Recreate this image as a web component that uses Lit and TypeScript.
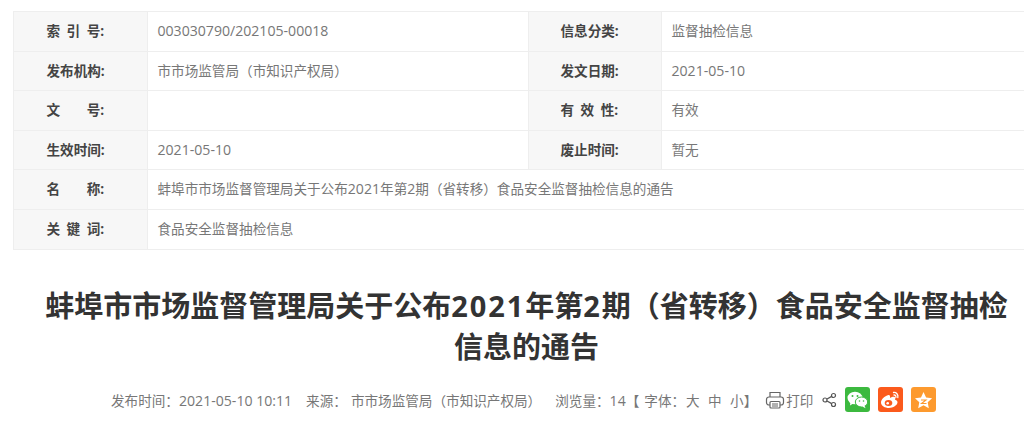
import { LitElement, html, css, svg } from "lit";
import { customElement } from "lit/decorators.js";

const num = (t: string) => html`<span class="num">${t}</span>`;

const rows: [string, unknown, string?, unknown?][] = [
  ["索 引 号:", num("003030790/202105-00018"), "信息分类:", "监督抽检信息"],
  ["发布机构:", "市市场监管局（市知识产权局）", "发文日期:", num("2021-05-10")],
  ["文　  号:", "", "有 效 性:", "有效"],
  ["生效时间:", num("2021-05-10"), "废止时间:", "暂无"],
  ["名　  称:", html`蚌埠市市场监督管理局关于公布${num("2021")}年第${num("2")}期（省转移）食品安全监督抽检信息的通告`],
  ["关 键 词:", "食品安全监督抽检信息"],
];

@customElement("app-root")
export class AppRoot extends LitElement {
  static styles = css`
    :host {
      display: block;
      width: 1024px;
      height: 422px;
      overflow: hidden;
      background: #fff;
      font-family: "Open Sans", "Noto Sans CJK SC", sans-serif;
      color: #777;
    }
    .wrap { padding: 11px 0 0 13px; }
    .table {
      display: grid;
      grid-template-columns: 134px 381px 133px 363px;
      width: 1012px;
      border-top: 1px solid #eee;
      border-left: 1px solid #eee;
      box-sizing: border-box;
    }
    .cell {
      height: 39.6px;
      box-sizing: border-box;
      border-right: 1px solid #eee;
      border-bottom: 1px solid #eee;
      font-size: 13.6px;
      padding-left: 9.5px;
      white-space: pre;
    }
    .value { line-height: 38.6px; }
    .num { font-size: 14.1px; }
    .label {
      background: #f7f7f7;
      color: #444;
      font-weight: 700;
      line-height: 37.6px;
      padding-left: 32.5px;
      word-spacing: 3px;
    }
    .label.second { padding-left: 31.5px; }
    .span3 { grid-column: span 3; }
    h1 {
      margin: 35px 0 0;
      padding: 0 14px 0 43px;
      text-align: center;
      font-size: 29px;
      line-height: 41px;
      font-weight: 700;
      color: #333;
    }
    .d { letter-spacing: 1.9px; }
    .meta {
      display: flex;
      align-items: center;
      height: 30px;
      margin-top: 18px;
      padding-left: 111px;
      font-size: 13.6px;
      color: #777;
      white-space: pre;
    }
    .time { margin-right: 14px; }
    .src-label { margin-right: 4px; }
    .src { margin-right: 14px; }
    .font-label { margin: 0 1px 0 5px; }
    .size { margin-right: 8.4px; }
    .size.last { margin-right: 0; }
    .print { display: flex; align-items: center; margin: 0 9px 0 8px; white-space: normal; }
    .print svg { margin-right: 1px; }
    .share { display: flex; margin-right: 8px; }
    .btn {
      width: 25px;
      height: 25px;
      border-radius: 3px;
      margin-right: 8px;
      display: flex;
      align-items: center;
      justify-content: center;
    }
    .wx { background: #3cb93f; }
    .wb { background: #fb5a1c; }
    .qz { background: #fd9a2e; }
    svg { display: block; }
  `;

  render() {
    return html`
      <div class="wrap">
        <div class="table">
          ${rows.map((r) =>
            r.length === 4
              ? html`<div class="cell label">${r[0]}</div>
                  <div class="cell value">${r[1]}</div>
                  <div class="cell label second">${r[2]}</div>
                  <div class="cell value">${r[3]}</div>`
              : html`<div class="cell label">${r[0]}</div>
                  <div class="cell value span3">${r[1]}</div>`
          )}
        </div>
      </div>
      <h1>蚌埠市市场监督管理局关于公布<span class="d">2021</span>年第<span class="d">2</span>期（省转移）食品安全监督抽检信息的通告</h1>
      <div class="meta">
        <span class="time">发布时间：<span class="num">2021-05-10 10:11</span></span>
        <span class="src-label">来源：</span>
        <span class="src">市市场监管局（市知识产权局）</span>
        <span>浏览量：<span class="num">14</span></span>
        <span>【</span>
        <span class="font-label">字体：</span>
        <span class="size">大</span>
        <span class="size">中</span>
        <span class="size last">小</span>
        <span>】</span>
        <span class="print">
          <svg width="20" height="20" viewBox="0 0 20 20" fill="none" stroke="#666" stroke-width="1.2">
            <path d="M5 7V2.500h10V7" />
            <rect x="1.500" y="7" width="17" height="8" rx="2.500" />
            <rect x="5" y="11.500" width="10" height="6.500" rx="1" fill="#fff" />
            <path d="M7 14h6M7 16h6" />
          </svg><span>打印</span>
        </span>
        <span class="share">
          <svg width="15" height="16" viewBox="0 0 15 16" fill="none" stroke="#555" stroke-width="1.2">
            <circle cx="11.500" cy="3.500" r="2" />
            <circle cx="3" cy="8" r="2" />
            <circle cx="11.500" cy="12.500" r="2" />
            <path d="M5 7l4.700-2.600M5 9l4.700 2.600" />
          </svg>
        </span>
        <span class="btn wx">
          <svg width="21" height="18" viewBox="0 0 21 18" fill="#fff">
            <ellipse cx="8" cy="7" rx="7.500" ry="6.300" />
            <path d="M3.500 10.500 3 14.500l4-2.500z" />
            <ellipse cx="14.500" cy="11" rx="6.200" ry="5" stroke="#3cb93f" stroke-width="1" />
            <path d="M17.500 14.500l1 2.800-3.500-2z" />
            ${svg`<g fill="#3cb93f"><circle cx="5.500" cy="5" r="1"/><circle cx="10.500" cy="5" r="1"/><circle cx="12.500" cy="10" r=".8"/><circle cx="16.500" cy="10" r=".8"/></g>`}
          </svg>
        </span>
        <span class="btn wb">
          <svg width="21" height="19" viewBox="0 0 21 19" fill="none">
            <path d="M8.500 5C4.500 6 1 9.500 1 12.500 1 15.800 5 18 9 18s8.500-2.700 8.500-5.700c0-1.800-1.600-2.300-2.500-2.600.6-1.400.4-2.400-.3-2.800-1-.5-3 0-4.700 1 .4-1.800-.2-3.300-1.500-2.900z" fill="#fff" />
            <ellipse cx="8.500" cy="13" rx="3.800" ry="3" fill="#fb5a1c" />
            <circle cx="7.700" cy="13.300" r="1.300" fill="#fff" />
            <path d="M13.500 2.500c2.800-.4 5 2 4.300 5M14 5c1.300-.2 2.200 1 1.900 2.300" stroke="#fff" stroke-width="1.300" stroke-linecap="round" />
          </svg>
        </span>
        <span class="btn qz">
          <svg width="19" height="18" viewBox="0 0 19 18">
            <path d="M9.500 1l2.600 5.400 6 .8-4.400 4.100 1.100 5.900-5.300-2.900-5.300 2.900 1.100-5.900L1 7.200l6-.8z" fill="#fff" />
            <path d="M7 9h5l-4.500 3.500h5" fill="none" stroke="#fd9a2e" stroke-width="1.100" />
          </svg>
        </span>
      </div>
    `;
  }
}
